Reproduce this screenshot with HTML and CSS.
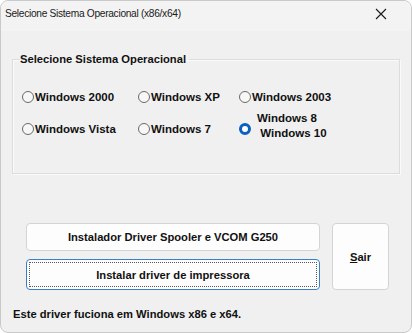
FILE: index.html
```html
<!DOCTYPE html>
<html lang="pt">
<head>
  <meta charset="UTF-8" />
  <title>Selecione Sistema Operacional</title>
  <link rel="stylesheet" href="styles.css">
</head>
<body>
  <div class="window">
    <div class="titlebar">
      <span class="title">Selecione Sistema Operacional (x86/x64)</span>
      <svg class="close" width="12" height="12" viewBox="0 0 12 12">
        <path d="M1 1 L11 11 M11 1 L1 11" stroke="#1a1a1a" stroke-width="1.1" fill="none"/>
      </svg>
    </div>

    <div class="client">
      <fieldset class="group">
        <legend>Selecione Sistema Operacional</legend>
        <div class="options">
          <label class="opt"><span class="radio"></span>Windows 2000</label>
          <label class="opt"><span class="radio"></span>Windows XP</label>
          <label class="opt"><span class="radio"></span>Windows 2003</label>
          <label class="opt"><span class="radio"></span>Windows Vista</label>
          <label class="opt"><span class="radio"></span>Windows 7</label>
          <label class="opt"><span class="radio checked"></span><span class="two">Windows 8<br>&nbsp;Windows 10</span></label>
        </div>
      </fieldset>

      <div class="actions">
        <button class="btn">Instalador Driver Spooler e VCOM G250</button>
        <button class="btn exit"><u>S</u>air</button>
        <button class="btn focus"><span>Instalar driver de impressora</span></button>
      </div>

      <p class="note">Este driver fuciona em Windows x86 e x64.</p>
    </div>
  </div>
</body>
</html>
```

FILE: styles.css
```css
body {
  margin: 0;
  background: #ffffff;
  font-family: "Liberation Sans", Arial, sans-serif;
}
.window {
  width: 410px;
  height: 331px;
  border: 1px solid #c9c9c9;
  border-radius: 8px;
  background: #f0f0f0;
  overflow: hidden;
  display: flex;
  flex-direction: column;
}
.titlebar {
  height: 30px;
  box-sizing: border-box;
  display: flex;
  align-items: flex-start;
  justify-content: space-between;
  padding: 6px 24px 0 4px;
  background: #f3f3f3;
}
.title {
  font-family: "Liberation Sans", Arial, sans-serif;
  font-size: 10.2px;
  letter-spacing: -0.3px;
  line-height: 14px;
  color: #1a1a1a;
}
.close {
  margin-top: 1px;
}
.client {
  flex: 1;
  padding: 0 11px 0 11px;
  display: flex;
  flex-direction: column;
}
.group {
  margin: 21px 0 0 0;
  padding: 0 0 0 9px;
  height: 122px;
  box-sizing: border-box;
  border: 1px solid #dcdcdc;
  box-shadow: inset 1px 1px 0 #fafafa, 1px 1px 0 #fafafa;
}
.group legend {
  font-size: 11.2px;
  font-weight: bold;
  color: #111;
  padding: 0 3px 0 0;
  margin-left: -2px;
  line-height: 14px;
}
.options {
  display: grid;
  grid-template-columns: 116px 101px 140px;
  grid-template-rows: 32px 32px;
  margin-top: 22px;
}
.opt {
  display: flex;
  align-items: center;
  font-size: 11.5px;
  font-weight: bold;
  color: #111;
  height: 18px;
}
.radio {
  width: 12px;
  height: 12px;
  border: 1px solid #6a6a6a;
  border-radius: 50%;
  box-sizing: border-box;
  margin-right: 1px;
  background: #f7f7f7;
  flex: none;
}
.radio.checked {
  border: 3px solid #0a5fc0;
  background: #ffffff;
  margin-right: 6px;
}
.two {
  line-height: 15px;
  margin-top: -6px;
}
.actions {
  display: grid;
  grid-template-columns: 294px 57px;
  grid-template-rows: 28px 31px;
  column-gap: 12px;
  row-gap: 8px;
  margin: 49px 0 0 14px;
}
.btn {
  font-family: "Liberation Sans", Arial, sans-serif;
  font-size: 11.2px;
  font-weight: bold;
  color: #111;
  background: #fdfdfd;
  border: 1px solid #d4d4d4;
  border-radius: 4px;
  padding: 0;
}
.exit {
  grid-row: 1 / span 2;
  grid-column: 2;
}
.focus {
  border: 1px solid #3a7ec8;
  padding: 2px;
}
.focus span {
  display: flex;
  align-items: center;
  justify-content: center;
  height: 100%;
  border: 1px dotted #555;
  box-sizing: border-box;
}
.note {
  margin: 18px 0 0 1px;
  font-size: 11.2px;
  font-weight: bold;
  color: #111;
}
```
